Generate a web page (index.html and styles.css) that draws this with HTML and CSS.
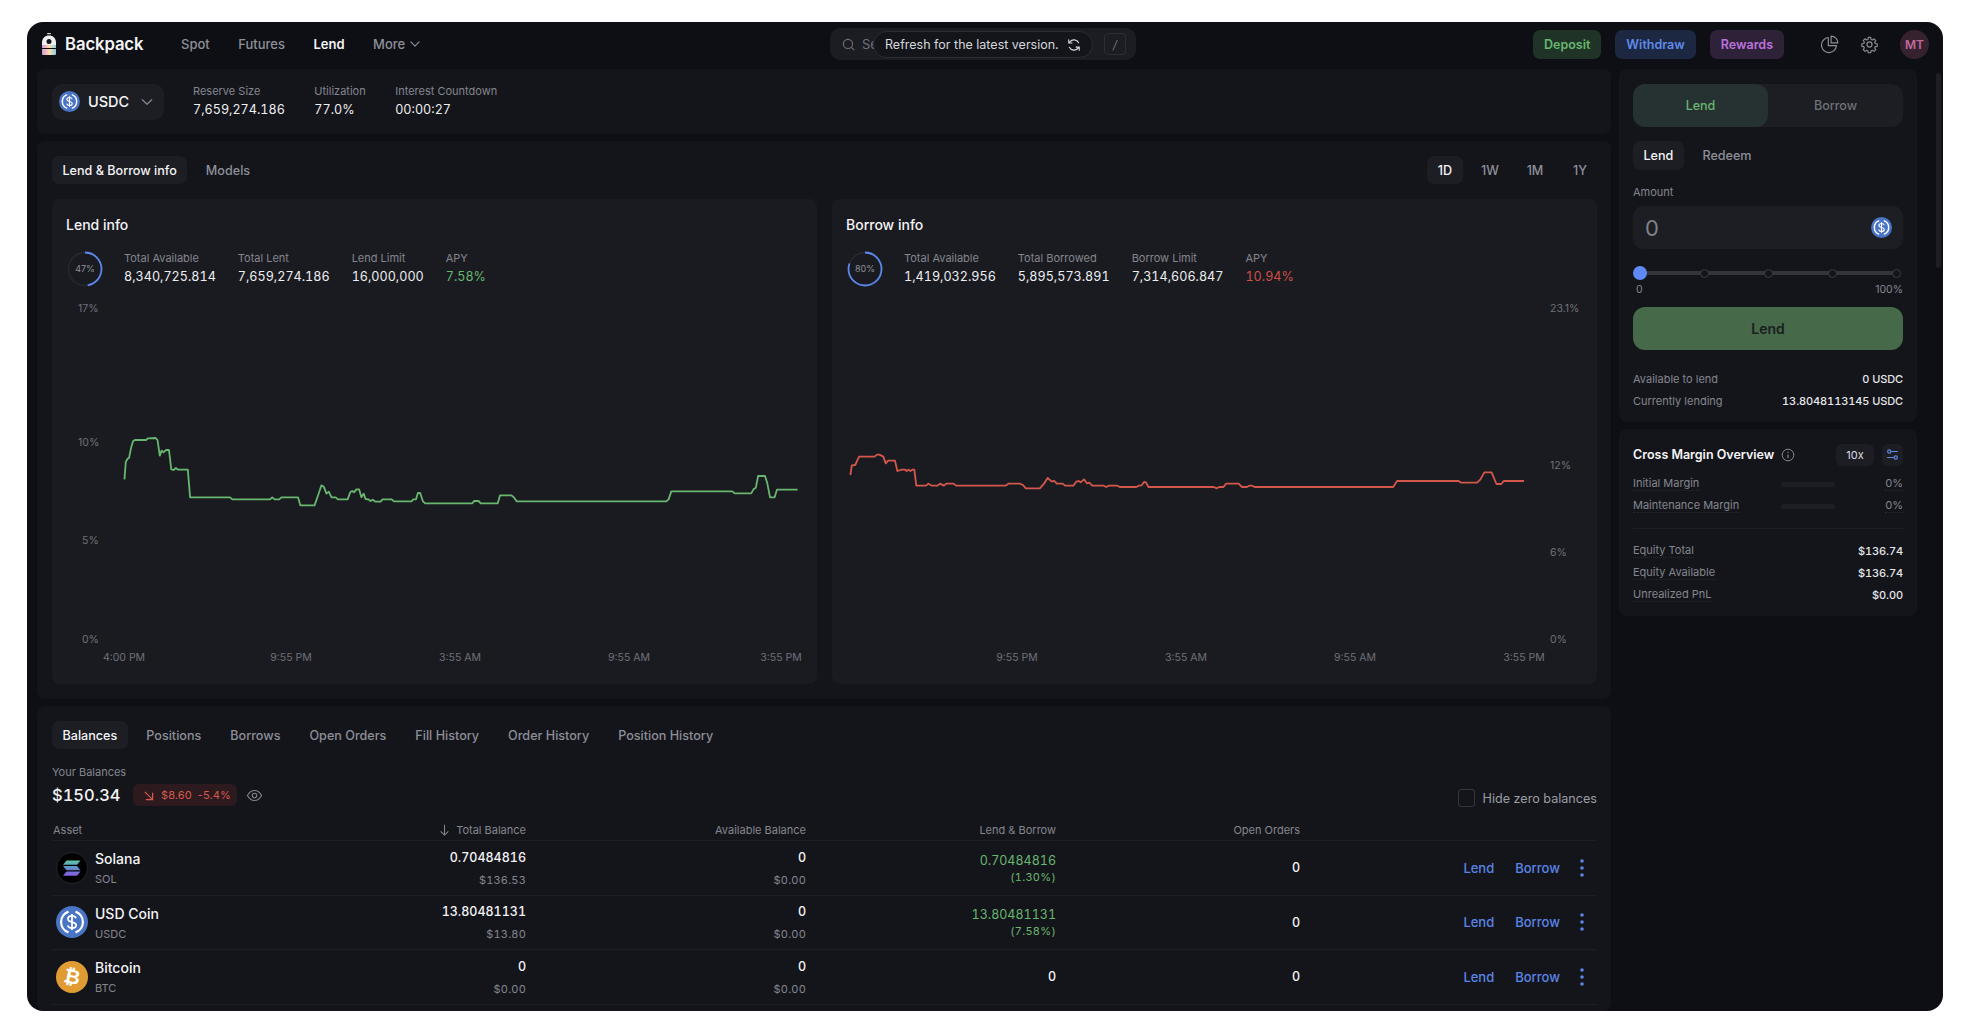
FILE: index.html
```html
<!DOCTYPE html>
<html lang="en">
<head>
<meta charset="utf-8">
<title>Backpack Lend</title>
<link rel="stylesheet" href="styles.css">
</head>
<body>
<svg class="defs" width="0" height="0" aria-hidden="true">
  <defs>
    <linearGradient id="solgrad" x1="0" y1="0" x2="0" y2="1">
      <stop offset="0" stop-color="#5fc7a8"/><stop offset=".5" stop-color="#5f8ec8"/><stop offset="1" stop-color="#8a5ce8"/>
    </linearGradient>
    <linearGradient id="rainbow" x1="0" y1="0" x2="1" y2="0">
      <stop offset="0" stop-color="#b9a6e8"/><stop offset=".25" stop-color="#f3b4c0"/><stop offset=".55" stop-color="#f5e3a8"/><stop offset="1" stop-color="#8fc6e8"/>
    </linearGradient>
    <symbol id="usdc" viewBox="0 0 32 32">
      <circle cx="16" cy="16" r="16" fill="#4a74c4"/>
      <path d="M12.500 5.600A11 11 0 0 0 12.500 26.400M19.500 5.600A11 11 0 0 1 19.500 26.400" fill="none" stroke="#fff" stroke-width="2.200"/>
      <path d="M20 12.300c-.5-1.600-2-2.400-4-2.400-2.400 0-4 1.200-4 3 0 4.300 8.200 2 8.200 6.200 0 1.900-1.700 3-4.200 3-2.200 0-3.800-1-4.200-2.700M16 8v16" fill="none" stroke="#fff" stroke-width="1.800"/>
    </symbol>
    <symbol id="refresh" viewBox="0 0 24 24">
      <path d="M20 8A9 9 0 0 0 5 6.500L3 8.500M3 3v5.500h5.500M4 16a9 9 0 0 0 15 1.500l2-2M21 21v-5.500h-5.500" fill="none" stroke="currentColor" stroke-width="2" stroke-linecap="round" stroke-linejoin="round"/>
    </symbol>
    <symbol id="kebab" viewBox="0 0 6 20">
      <circle cx="3" cy="3" r="1.800" fill="currentColor"/><circle cx="3" cy="10" r="1.800" fill="currentColor"/><circle cx="3" cy="17" r="1.800" fill="currentColor"/>
    </symbol>
    <symbol id="chev" viewBox="0 0 24 24">
      <path d="M5 8.500l7 7 7-7" fill="none" stroke="currentColor" stroke-width="2" stroke-linecap="round" stroke-linejoin="round"/>
    </symbol>
  </defs>
</svg>

<div class="window">
  <header class="topbar">
    <div class="brand">
      <svg class="logo" viewBox="0 0 14 22" aria-hidden="true">
        <rect x="5" y="0" width="4" height="1.200" rx=".6" fill="#d8d8d8"/>
        <path d="M0 10c0-5 3-7.500 7-7.500S14 5 14 10v2H0z" fill="#f0f0f0"/>
        <circle cx="7" cy="8.500" r="2.500" fill="#14151b"/>
        <path d="M0 12h14v3H0z" fill="url(#rainbow)"/>
        <path d="M0 16h14v5a1 1 0 0 1-1 1H1a1 1 0 0 1-1-1z" fill="url(#rainbow)"/>
      </svg>
      <span class="brand-name">Backpack</span>
    </div>
    <nav class="nav">
      <a class="nav-item">Spot</a>
      <a class="nav-item">Futures</a>
      <a class="nav-item is-active">Lend</a>
      <a class="nav-item nav-more">More <svg class="nav-chev"><use href="#chev"/></svg></a>
    </nav>
    <div class="search">
      <svg class="search-icon" viewBox="0 0 24 24" aria-hidden="true"><circle cx="11" cy="11" r="8.500" fill="none" stroke="currentColor" stroke-width="2"/><path d="M17.500 17.500L22 22" stroke="currentColor" stroke-width="2" stroke-linecap="round"/></svg>
      <span class="search-ph">Se</span>
      <kbd class="search-key">/</kbd>
      <div class="refresh-pill">Refresh for the latest version. <svg class="refresh-icon"><use href="#refresh"/></svg></div>
    </div>
    <div class="actions">
      <button class="cta cta-green">Deposit</button>
      <button class="cta cta-blue">Withdraw</button>
      <button class="cta cta-purple">Rewards</button>
      <svg class="top-icon pie" viewBox="0 0 24 24" aria-hidden="true"><path d="M10.500 3.200A9.500 9.500 0 1 0 20.800 13.500H10.500z" fill="none" stroke="currentColor" stroke-width="1.500" stroke-linejoin="round"/><path d="M14 1.500A8.500 8.500 0 0 1 22.500 10H14z" fill="none" stroke="currentColor" stroke-width="1.500" stroke-linejoin="round"/></svg>
      <svg class="top-icon gear" viewBox="0 0 24 24" aria-hidden="true"><path d="M10.300 2.500h3.400l.5 2.800 1.900.8 2.300-1.600 2.400 2.400-1.600 2.300.8 1.900 2.800.5v3.400l-2.800.5-.8 1.900 1.600 2.300-2.400 2.400-2.300-1.600-1.900.8-.5 2.800h-3.400l-.5-2.800-1.900-.8-2.300 1.600-2.400-2.400 1.600-2.300-.8-1.900-2.800-.5v-3.400l2.800-.5.8-1.900-1.600-2.300 2.400-2.400 2.300 1.600 1.900-.8z" transform="translate(1.200 .8) scale(.9)" fill="none" stroke="currentColor" stroke-width="1.600" stroke-linejoin="round"/><circle cx="12" cy="12" r="3.200" fill="none" stroke="currentColor" stroke-width="1.500"/></svg>
      <div class="avatar">MT</div>
    </div>
  </header>

  <div class="main">
    <div class="left">
      <section class="panel reserve">
        <button class="asset-select">
          <svg class="asset-icon"><use href="#usdc"/></svg>
          <span>USDC</span>
          <svg class="asset-chev"><use href="#chev"/></svg>
        </button>
        <div class="stats stats-wide">
          <div class="stat"><span class="stat-label">Reserve Size</span><span class="stat-value">7,659,274.186</span></div>
          <div class="stat"><span class="stat-label">Utilization</span><span class="stat-value">77.0%</span></div>
          <div class="stat"><span class="stat-label">Interest Countdown</span><span class="stat-value">00:00:27</span></div>
        </div>
      </section>

      <section class="panel info">
        <div class="info-tabs">
          <div class="tabs">
            <span class="tab is-active">Lend &amp; Borrow info</span>
            <span class="tab">Models</span>
          </div>
          <div class="ranges">
            <span class="tab range is-active">1D</span>
            <span class="tab range">1W</span>
            <span class="tab range">1M</span>
            <span class="tab range">1Y</span>
          </div>
        </div>
        <div class="cards">
          <article class="card">
            <h2 class="card-title">Lend info</h2>
            <div class="card-stats">
              <div class="ring">
                <svg viewBox="0 0 36 36" aria-hidden="true"><circle cx="18" cy="18" r="16.500" class="ring-bg"/><circle cx="18" cy="18" r="16.500" class="ring-fg" stroke-dasharray="48.700 103.700"/></svg>
                <span class="ring-text">47%</span>
              </div>
              <div class="stats">
                <div class="stat"><span class="stat-label">Total Available</span><span class="stat-value">8,340,725.814</span></div>
                <div class="stat"><span class="stat-label">Total Lent</span><span class="stat-value">7,659,274.186</span></div>
                <div class="stat"><span class="stat-label">Lend Limit</span><span class="stat-value">16,000,000</span></div>
                <div class="stat"><span class="stat-label">APY</span><span class="stat-value green">7.58%</span></div>
              </div>
            </div>
            <svg class="chart" viewBox="0 0 765 389" aria-label="Lend APY chart">
              <text class="tick" x="26" y="17">17%</text>
              <text class="tick" x="26" y="151">10%</text>
              <text class="tick" x="30" y="249">5%</text>
              <text class="tick" x="30" y="348">0%</text>
              <text class="tick" x="72" y="366" text-anchor="middle">4:00 PM</text>
              <text class="tick" x="239" y="366" text-anchor="middle">9:55 PM</text>
              <text class="tick" x="408" y="366" text-anchor="middle">3:55 AM</text>
              <text class="tick" x="577" y="366" text-anchor="middle">9:55 AM</text>
              <text class="tick" x="729" y="366" text-anchor="middle">3:55 PM</text>
              <svg x="38" y="125" width="720" height="260" viewBox="0 0 1568 780" preserveAspectRatio="none">
                <polyline class="line line-green" points="75,178 78,125 82,116 85,114 90,80 94,63 98,60 122,60 126,55 143,54 147,60 152,107 156,92 160,97 166,90 172,90 177,148 182,150 187,144 192,149 213,149 218,232 305,232 310,238 392,238 397,232 402,238 412,238 417,232 453,232 458,256 489,256 497,225 504,196 509,200 515,221 520,215 526,232 535,232 540,238 561,238 567,216 571,213 575,217 580,208 586,208 591,232 596,221 600,237 606,238 611,243 616,239 621,245 633,245 637,238 657,238 662,244 700,244 704,238 710,238 714,219 719,219 725,244 730,250 832,250 837,243 846,243 851,250 888,250 893,226 918,226 923,232 929,244 1255,244 1260,238 1266,214 1399,214 1404,220 1440,220 1445,208 1450,203 1455,168 1470,168 1475,190 1481,232 1491,232 1496,209 1541,209"/>
              </svg>
            </svg>
          </article>
          <article class="card">
            <h2 class="card-title">Borrow info</h2>
            <div class="card-stats">
              <div class="ring">
                <svg viewBox="0 0 36 36" aria-hidden="true"><circle cx="18" cy="18" r="16.500" class="ring-bg"/><circle cx="18" cy="18" r="16.500" class="ring-fg" stroke-dasharray="82.900 103.700"/></svg>
                <span class="ring-text">80%</span>
              </div>
              <div class="stats">
                <div class="stat"><span class="stat-label">Total Available</span><span class="stat-value">1,419,032.956</span></div>
                <div class="stat"><span class="stat-label">Total Borrowed</span><span class="stat-value">5,895,573.891</span></div>
                <div class="stat"><span class="stat-label">Borrow Limit</span><span class="stat-value">7,314,606.847</span></div>
                <div class="stat"><span class="stat-label">APY</span><span class="stat-value red">10.94%</span></div>
              </div>
            </div>
            <svg class="chart" viewBox="0 0 765 389" aria-label="Borrow APY chart">
              <text class="tick" x="718" y="17">23.1%</text>
              <text class="tick" x="718" y="174">12%</text>
              <text class="tick" x="718" y="261">6%</text>
              <text class="tick" x="718" y="348">0%</text>
              <text class="tick" x="185" y="366" text-anchor="middle">9:55 PM</text>
              <text class="tick" x="354" y="366" text-anchor="middle">3:55 AM</text>
              <text class="tick" x="523" y="366" text-anchor="middle">9:55 AM</text>
              <text class="tick" x="692" y="366" text-anchor="middle">3:55 PM</text>
              <svg x="-2" y="125" width="760" height="260" viewBox="0 0 1568 780" preserveAspectRatio="none">
                <polyline class="line line-red" points="42,165 45,136 52,135 60,110 92,110 97,104 102,104 110,110 115,130 120,122 134,122 139,153 148,149 155,149 158,153 162,149 166,153 170,149 174,149 178,197 198,197 203,191 210,197 222,197 227,191 235,197 240,191 255,191 260,197 362,197 368,191 392,191 398,195 404,205 433,205 442,190 449,174 457,184 463,183 468,191 480,191 485,197 502,197 508,185 513,183 517,187 524,178 530,190 535,188 541,197 565,197 570,201 575,197 593,197 598,201 632,201 637,197 643,196 648,186 652,187 657,201 792,201 798,205 803,201 812,201 817,191 843,191 850,201 860,201 865,197 871,197 876,201 1162,201 1170,183 1297,183 1302,188 1335,188 1342,178 1350,157 1365,157 1375,192 1385,192 1390,183 1432,183"/>
              </svg>
            </svg>
          </article>
        </div>
      </section>

      <section class="panel balances">
        <div class="tabs">
          <span class="tab is-active">Balances</span>
          <span class="tab">Positions</span>
          <span class="tab">Borrows</span>
          <span class="tab">Open Orders</span>
          <span class="tab">Fill History</span>
          <span class="tab">Order History</span>
          <span class="tab">Position History</span>
        </div>
        <div class="summary">
          <div class="summary-left">
            <span class="summary-label">Your Balances</span>
            <div class="summary-row">
              <span class="summary-total">$150.34</span>
              <span class="delta"><svg class="delta-icon" viewBox="0 0 12 12" aria-hidden="true"><path d="M2 2l8 8M3 10.500h7.500V3" fill="none" stroke="currentColor" stroke-width="1.300"/></svg>$8.60<span class="delta-pct">-5.4%</span></span>
              <svg class="eye" viewBox="0 0 24 24" aria-hidden="true"><path d="M2 12c2.500-4.500 6-7 10-7s7.500 2.500 10 7c-2.500 4.500-6 7-10 7s-7.500-2.500-10-7z" fill="none" stroke="currentColor" stroke-width="1.600"/><circle cx="12" cy="12" r="3.200" fill="none" stroke="currentColor" stroke-width="1.600"/></svg>
            </div>
          </div>
          <label class="hide-zero"><span class="checkbox"></span>Hide zero balances</label>
        </div>
        <div class="table">
          <div class="row head">
            <span class="th-asset">Asset</span>
            <span class="num th-sort"><svg class="sort-icon" viewBox="0 0 12 14" aria-hidden="true"><path d="M6 1v12M1.500 8.500L6 13l4.500-4.500" fill="none" stroke="currentColor" stroke-width="1.200"/></svg>Total Balance</span>
            <span class="num">Available Balance</span>
            <span class="num">Lend &amp; Borrow</span>
            <span class="num">Open Orders</span>
            <span></span>
          </div>

          <div class="row">
            <div class="asset">
              <svg class="coin" viewBox="0 0 32 32" aria-hidden="true"><circle cx="16" cy="16" r="15.500" fill="#000" stroke="#23252b"/><path d="M10.500 8.500h14l-3.500 4.300h-14zM7 14h14l3.500 4.200h-14zM10.500 19.500h14l-3.500 4.300h-14z" fill="url(#solgrad)"/></svg>
              <div class="asset-text"><span class="asset-name">Solana</span><span class="asset-sym">SOL</span></div>
            </div>
            <div class="cell"><span class="val">0.70484816</span><span class="usd">$136.53</span></div>
            <div class="cell"><span class="val">0</span><span class="usd">$0.00</span></div>
            <div class="cell cell-lend"><span class="val green">0.70484816</span><span class="rate">(1.30%)</span></div>
            <div class="cell cell-plain"><span class="val">0</span></div>
            <div class="row-actions"><a>Lend</a><a>Borrow</a><svg class="kebab"><use href="#kebab"/></svg></div>
          </div>

          <div class="row">
            <div class="asset">
              <svg class="coin"><use href="#usdc"/></svg>
              <div class="asset-text"><span class="asset-name">USD Coin</span><span class="asset-sym">USDC</span></div>
            </div>
            <div class="cell"><span class="val">13.80481131</span><span class="usd">$13.80</span></div>
            <div class="cell"><span class="val">0</span><span class="usd">$0.00</span></div>
            <div class="cell cell-lend"><span class="val green">13.80481131</span><span class="rate">(7.58%)</span></div>
            <div class="cell cell-plain"><span class="val">0</span></div>
            <div class="row-actions"><a>Lend</a><a>Borrow</a><svg class="kebab"><use href="#kebab"/></svg></div>
          </div>

          <div class="row">
            <div class="asset">
              <svg class="coin" viewBox="0 0 32 32" aria-hidden="true"><circle cx="16" cy="16" r="16" fill="#e09c33"/><text class="btc-glyph" x="16" y="22.500" text-anchor="middle" transform="rotate(12 16 16)">₿</text></svg>
              <div class="asset-text"><span class="asset-name">Bitcoin</span><span class="asset-sym">BTC</span></div>
            </div>
            <div class="cell"><span class="val">0</span><span class="usd">$0.00</span></div>
            <div class="cell"><span class="val">0</span><span class="usd">$0.00</span></div>
            <div class="cell cell-plain"><span class="val">0</span></div>
            <div class="cell cell-plain"><span class="val">0</span></div>
            <div class="row-actions"><a>Lend</a><a>Borrow</a><svg class="kebab"><use href="#kebab"/></svg></div>
          </div>
        </div>
      </section>
    </div>

    <aside class="right">
      <section class="panel trade">
        <div class="toggle">
          <span class="toggle-item is-active">Lend</span>
          <span class="toggle-item">Borrow</span>
        </div>
        <div class="tabs subtabs">
          <span class="tab is-active">Lend</span>
          <span class="tab">Redeem</span>
        </div>
        <span class="field-label">Amount</span>
        <div class="amount">
          <span class="amount-value">0</span>
          <svg class="amount-icon"><use href="#usdc"/></svg>
        </div>
        <div class="slider">
          <span class="knob"></span>
          <span class="stop"></span><span class="stop"></span><span class="stop"></span><span class="stop"></span>
        </div>
        <div class="slider-labels"><span>0</span><span>100%</span></div>
        <button class="submit">Lend</button>
        <div class="kv first"><span>Available to lend</span><b>0 USDC</b></div>
        <div class="kv"><span>Currently lending</span><b>13.8048113145 USDC</b></div>
      </section>

      <section class="panel margin">
        <div class="margin-head">
          <span class="margin-title">Cross Margin Overview</span>
          <svg class="info-icon" viewBox="0 0 24 24" aria-hidden="true"><circle cx="12" cy="12" r="10" fill="none" stroke="currentColor" stroke-width="1.700"/><path d="M12 11v6" stroke="currentColor" stroke-width="2"/><circle cx="12" cy="7.500" r="1.200" fill="currentColor"/></svg>
          <span class="lev">10x</span>
          <span class="tune"><svg viewBox="0 0 24 24" aria-hidden="true"><circle cx="6" cy="6.500" r="3" fill="none" stroke="currentColor" stroke-width="2"/><path d="M9 6.500h13M2 17.500h13" stroke="currentColor" stroke-width="2"/><circle cx="18" cy="17.500" r="3" fill="none" stroke="currentColor" stroke-width="2"/></svg></span>
        </div>
        <div class="kv bar-row"><span class="dotted">Initial Margin</span><i class="meter"></i><b class="dotted muted">0%</b></div>
        <div class="kv bar-row"><span class="dotted">Maintenance Margin</span><i class="meter"></i><b class="dotted muted">0%</b></div>
        <hr class="rule">
        <div class="kv"><span class="dotted">Equity Total</span><b>$136.74</b></div>
        <div class="kv"><span class="dotted">Equity Available</span><b>$136.74</b></div>
        <div class="kv"><span class="dotted">Unrealized PnL</span><b>$0.00</b></div>
      </section>
    </aside>
    <div class="scrollbar"></div>
  </div>
</div>
</body>
</html>
```
FILE: styles.css
```css
* { box-sizing: border-box; }
html, body { margin: 0; height: 100%; background: #fff; overflow: hidden; }
body {
  padding: 22px 27px;
  font-family: Inter, "Liberation Sans", sans-serif;
  font-size: 12px;
  color: #f4f4f6;
}
.defs { position: absolute; }
a { color: inherit; text-decoration: none; }
button { font-family: inherit; border: 0; }

.window {
  width: 1916px;
  height: 989px;
  background: #0e0f14;
  border-radius: 16px;
  overflow: hidden;
  display: flex;
  flex-direction: column;
}

/* top bar */
.topbar {
  height: 47px;
  flex: none;
  position: relative;
  display: flex;
  align-items: center;
  padding: 0 14px 3px 15px;
}
.brand { display: flex; align-items: center; gap: 9px; width: 139px; }
.logo { width: 14px; height: 22px; }
.brand-name { font-size: 16.700px; font-weight: 600; letter-spacing: -.1px; }
.nav { display: flex; gap: 28.500px; font-size: 13px; font-weight: 500; color: #8d8f97; }
.nav-item { display: flex; align-items: center; gap: 3px; }
.nav-item.is-active { color: #f4f4f6; font-weight: 600; }
.nav-chev { width: 14px; height: 14px; }

.search {
  position: absolute;
  left: 803px;
  top: 6px;
  width: 306px;
  height: 32px;
  background: #1c1d23;
  border-radius: 10px;
  display: flex;
  align-items: center;
  padding: 0 10px 0 12px;
  color: #6f7178;
}
.search-icon { width: 13px; height: 13px; margin-right: 7px; }
.search-ph { font-size: 13px; }
.search-key {
  margin-left: auto;
  width: 22px;
  height: 22px;
  border: 1px solid #2c2e35;
  border-radius: 4px;
  display: flex;
  align-items: center;
  justify-content: center;
  font: italic 12px Inter, sans-serif;
  color: #6f7178;
}
.refresh-pill {
  position: absolute;
  left: 43px;
  top: 3px;
  width: 220px;
  height: 27px;
  background: #14151b;
  border: 1px solid #2a2c33;
  border-radius: 14px;
  display: flex;
  align-items: center;
  justify-content: space-between;
  padding: 0 11px 0 11px;
  font-size: 12.500px;
  color: #d6d7db;
}
.refresh-icon { width: 14px; height: 14px; }

.actions { margin-left: auto; display: flex; align-items: center; }
.cta {
  height: 29px;
  padding: 0 11px;
  border-radius: 7px;
  font-size: 12.500px;
  font-weight: 600;
  margin-right: 14px;
}
.cta-green { background: #1f3327; color: #68b76f; }
.cta-blue { background: #1c2742; color: #5f8ae8; }
.cta-purple { background: #2e2239; color: #bf71de; margin-right: 36px; }
.top-icon { width: 19px; height: 19px; color: #8d8f97; }
.pie { margin-right: 21px; }
.gear { margin-right: 21px; }
.avatar {
  width: 29px;
  height: 29px;
  border-radius: 50%;
  background: #35222e;
  color: #c06a9c;
  font-size: 12px;
  font-weight: 600;
  display: flex;
  align-items: center;
  justify-content: center;
}

/* shell */
.main {
  flex: 1;
  min-height: 0;
  display: flex;
  gap: 8px;
  padding-left: 10px;
  position: relative;
}
.left { width: 1574px; display: flex; flex-direction: column; gap: 7px; }
.right { width: 298px; display: flex; flex-direction: column; gap: 7px; }
.panel { background: #14151b; border-radius: 8px; }
.scrollbar {
  position: absolute;
  right: 2px;
  top: 4px;
  width: 5px;
  height: 195px;
  border-radius: 3px;
  background: #1d1f25;
}

/* stats */
.reserve { height: 65px; flex: none; display: flex; align-items: center; padding: 0 15px; gap: 29px; }
.asset-select {
  width: 112px;
  height: 36px;
  background: #1c1e24;
  border-radius: 10px;
  display: flex;
  align-items: center;
  padding: 0 7px;
  color: #f4f4f6;
  font-size: 14.500px;
  font-weight: 500;
}
.asset-icon { width: 21px; height: 21px; margin-right: 8px; }
.asset-chev { width: 16px; height: 16px; margin-left: auto; margin-right: 2px; color: #7f818a; }
.stats { display: flex; gap: 22px; }
.stats-wide { gap: 29.500px; }
.stat { display: flex; flex-direction: column; gap: 3px; }
.stat-label { font-size: 11px; line-height: 14px; color: #84868e; }
.stat-value { font-size: 12.600px; line-height: 18px; color: #eeeff1; font-feature-settings: "tnum"; }
.green { color: #68b76f; }
.red { color: #cf4f45; }

/* info panel */
.info { height: 558px; flex: none; padding: 15px; display: flex; flex-direction: column; }
.info-tabs { display: flex; justify-content: space-between; margin-bottom: 15px; }
.tabs { display: flex; gap: 0; }
.tab {
  height: 28px;
  padding: 0 10.500px;
  display: flex;
  align-items: center;
  border-radius: 7px;
  font-size: 12.600px;
  font-weight: 500;
  color: #8d8f97;
  margin-right: 8px;
}
.tab.is-active { background: #1c1e24; color: #f4f4f6; }
.ranges { display: flex; margin-right: -2px; }
.range { width: 36px; padding: 0; justify-content: center; margin: 0 0 0 9px; }
.cards { flex: 1; display: flex; gap: 15px; }
.card { width: 765px; background: #1a1b21; border-radius: 8px; display: flex; flex-direction: column; padding-top: 15px; }
.card-title { margin: 0 0 0 14px; font-size: 14px; line-height: 21px; font-weight: 500; }
.card-stats { display: flex; align-items: center; gap: 21px; margin: 16px 0 8px 15px; height: 35px; }
.ring { position: relative; width: 36px; height: 36px; flex: none; }
.ring svg { width: 36px; height: 36px; display: block; transform: rotate(-90deg); }
.ring-bg, .ring-fg { fill: none; stroke-width: 1.800; }
.ring-bg { stroke: #24262c; }
.ring-fg { stroke: #5b86ea; }
.ring-text {
  position: absolute;
  inset: 0;
  display: flex;
  align-items: center;
  justify-content: center;
  font-size: 9px;
  color: #8d8f97;
}
.chart { width: 765px; height: 389px; display: block; flex: none; margin-top: auto; }
.tick { font-size: 10.500px; fill: #6f7178; font-family: Inter, sans-serif; }
.line { fill: none; stroke-width: 1.800; vector-effect: non-scaling-stroke; stroke-linejoin: round; }
.line-green { stroke: #68b76f; }
.line-red { stroke: #d4574b; }

/* balances */
.balances { flex: 1; min-height: 0; overflow: hidden; padding: 15px 14px 0 15px; }
.summary { display: flex; justify-content: space-between; align-items: flex-end; height: 46px; margin-top: 11px; }
.summary-left { display: flex; flex-direction: column; gap: 5px; }
.summary-label { font-size: 11px; line-height: 14px; color: #84868e; }
.summary-row { display: flex; align-items: center; height: 22px; }
.summary-total { font-size: 16.500px; font-weight: 500; width: 81px; font-feature-settings: "tnum"; }
.delta {
  height: 22px;
  width: 104px;
  background: #2c1a1e;
  border-radius: 6px;
  color: #d65a4e;
  font-size: 11px;
  display: flex;
  align-items: center;
  padding-left: 10px;
  letter-spacing: .1px;
}
.delta-icon { width: 11px; height: 11px; margin-right: 7px; }
.delta-pct { margin-left: 6px; }
.eye { width: 17px; height: 17px; margin-left: 9px; color: #7f818a; }
.hide-zero { display: flex; align-items: center; gap: 8px; font-size: 12.600px; color: #9a9ca3; margin-bottom: -1px; }
.checkbox { width: 17px; height: 18px; border: 1.500px solid #34363d; border-radius: 3px; background: #14151b; }

.table { margin-top: 17px; }
.row {
  display: grid;
  grid-template-columns: 200px 274px 280px 250px 244px 1fr;
  width: 1545px;
  height: 54.600px;
  border-bottom: 1px solid #1c1e24;
  align-items: center;
}
.head { height: 18px; align-items: start; font-size: 11px; line-height: 14px; color: #84868e; }
.th-asset { padding-left: 1px; }
.num { text-align: right; }
.th-sort { display: flex; justify-content: flex-end; align-items: center; gap: 6px; }
.sort-icon { width: 11px; height: 12px; }
.asset { display: flex; align-items: center; gap: 7px; padding-left: 4px; }
.coin { width: 32px; height: 32px; flex: none; }
.asset-text { display: flex; flex-direction: column; padding-top: 3px; }
.asset-name { font-size: 14px; line-height: 20px; font-weight: 500; }
.asset-sym { font-size: 11px; line-height: 20px; color: #84868e; }
.btc-glyph { font: bold 20px "DejaVu Sans", sans-serif; fill: #fff; }
.cell { display: flex; flex-direction: column; align-items: flex-end; padding-top: 2px; }
.cell-plain { padding-top: 1px; }
.val { font-size: 12.500px; line-height: 22px; font-weight: 500; font-feature-settings: "tnum"; }
.usd { font-size: 11px; line-height: 22px; color: #84868e; letter-spacing: .2px; font-feature-settings: "tnum"; }
.cell-lend .val { line-height: 16px; font-weight: 400; }
.rate { font-size: 11px; line-height: 16px; color: #68b76f; letter-spacing: .3px; font-feature-settings: "tnum"; }
.row-actions { display: flex; align-items: center; justify-content: flex-end; padding-right: 12px; gap: 21px; color: #5b84e6; font-size: 13px; font-weight: 500; }
.kebab { width: 6px; height: 20px; margin-left: -2px; }

/* trade panel */
.trade { height: 353px; flex: none; padding: 15px 14px 0; display: flex; flex-direction: column; }
.toggle { display: flex; height: 43px; background: #1c1e24; border-radius: 12px; font-size: 12.500px; font-weight: 500; color: #6f7178; }
.toggle-item { flex: 1; display: flex; align-items: center; justify-content: center; border-radius: 12px; }
.toggle-item.is-active { background: #263131; color: #68b76f; }
.subtabs { margin-top: 14px; }
.subtabs .tab { height: 29px; margin-right: 8px; }
.field-label { font-size: 11px; line-height: 14px; color: #84868e; margin-top: 15px; }
.amount {
  height: 43px;
  margin-top: 7px;
  background: #1c1e24;
  border-radius: 10px;
  display: flex;
  align-items: center;
  justify-content: space-between;
  padding: 0 11px 0 12px;
}
.amount-value { font-size: 22px; color: #7f818a; }
.amount-icon { width: 21px; height: 21px; }
.slider {
  position: relative;
  margin: 22px 6px 0 7px;
  height: 4px;
  border-radius: 2px;
  background: #33353c;
  display: flex;
  justify-content: flex-end;
  gap: 59px;
  align-items: center;
}
.knob { position: absolute; left: -7px; top: -5px; width: 14px; height: 14px; border-radius: 50%; background: #5f8af5; }
.stop { width: 9px; height: 9px; border-radius: 50%; background: #14151b; border: 1.500px solid #3a3c44; flex: none; margin-right: -4px; }
.slider-labels { display: flex; justify-content: space-between; margin-top: 8px; font-size: 10.500px; line-height: 14px; color: #84868e; padding-left: 3px; }
.submit {
  height: 43px;
  margin-top: 10px;
  border-radius: 12px;
  background: #466949;
  color: #1b1e1f;
  font-size: 14px;
  font-weight: 600;
}
.kv { display: flex; justify-content: space-between; align-items: center; height: 22px; font-size: 11px; color: #84868e; }
.kv.first { margin-top: 18px; }
.kv b { font-weight: 500; color: #e6e7ea; font-feature-settings: "tnum"; letter-spacing: -.1px; }
.kv b.muted { color: #84868e; font-weight: 400; }
.dotted { border-bottom: 1px dotted #26282e; line-height: 14px; }

/* margin panel */
.margin { height: 187px; flex: none; padding: 14.500px 14px 0; }
.margin-head { display: flex; align-items: center; height: 22px; margin-bottom: 7px; }
.margin-title { font-size: 12.500px; font-weight: 600; white-space: nowrap; }
.info-icon { width: 14px; height: 14px; margin-left: 7px; color: #84868e; }
.lev {
  margin-left: auto;
  width: 38px;
  height: 22px;
  background: #1c1e24;
  border-radius: 6px;
  display: flex;
  align-items: center;
  justify-content: center;
  font-size: 11px;
  color: #dcdde0;
}
.tune {
  margin-left: 8px;
  width: 21px;
  height: 22px;
  background: #1c1e24;
  border-radius: 6px;
  display: flex;
  align-items: center;
  justify-content: center;
  color: #5f8ae8;
}
.tune svg { width: 13px; height: 13px; }
.bar-row { position: relative; }
.meter { position: absolute; left: 148px; top: 9px; width: 54px; height: 5px; border-radius: 3px; background: #1c1e24; }
.rule { border: 0; border-top: 1px solid #1c1e24; margin: 11px 0 11px; }
```
